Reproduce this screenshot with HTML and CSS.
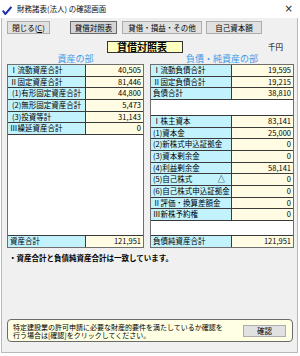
FILE: index.html
```html
<!DOCTYPE html>
<html lang="ja">
<head>
<meta charset="utf-8">
<title>財務諸表(法人) の確認画面</title>
<link rel="stylesheet" href="styles.css">
</head>
<body>
<div class="window">
  <div class="titlebar">
    <svg class="check" width="10" height="9" viewBox="0 0 10 9"><path d="M0.8 4.6 L3.4 8 L9.4 0.8" fill="none" stroke="#1f2fa8" stroke-width="2" stroke-linejoin="miter"/></svg>
    <span class="title">財務諸表(法人) の確認画面</span>
    <span class="close">×</span>
  </div>
  <div class="client">
    <div class="toolbar">
      <button class="btn btn-close">閉じる(<u>C</u>)</button>
      <button class="btn btn-bs active">貸借対照表</button>
      <button class="btn btn-pl">貸借・損益・その他</button>
      <button class="btn btn-eq">自己資本額</button>
    </div>
    <div class="heading-row">
      <div class="heading">貸借対照表</div>
      <div class="unit">千円</div>
    </div>
    <div class="sheets">
      <section class="sheet sheet-left">
        <h2 class="sheet-title">資産の部</h2>
        <div class="table">
          <div class="row"><span class="label">Ⅰ流動資産合計</span><span class="value">40,505</span></div>
          <div class="row"><span class="label">Ⅱ固定資産合計</span><span class="value">81,446</span></div>
          <div class="row"><span class="label sub">(1)有形固定資産合計</span><span class="value">44,800</span></div>
          <div class="row"><span class="label sub">(2)無形固定資産合計</span><span class="value">5,473</span></div>
          <div class="row"><span class="label sub">(3)投資等計</span><span class="value">31,143</span></div>
          <div class="row"><span class="label">Ⅲ繰延資産合計</span><span class="value">0</span></div>
          <div class="fill"></div>
          <div class="row total"><span class="label">資産合計</span><span class="value">121,951</span></div>
        </div>
      </section>
      <section class="sheet sheet-right">
        <h2 class="sheet-title">負債・純資産の部</h2>
        <div class="table">
          <div class="row"><span class="label">Ⅰ流動負債合計</span><span class="value">19,595</span></div>
          <div class="row"><span class="label">Ⅱ固定負債合計</span><span class="value">19,215</span></div>
          <div class="row"><span class="label">負債合計</span><span class="value">38,810</span></div>
          <div class="blank"></div>
          <div class="row"><span class="label">Ⅰ株主資本</span><span class="value">83,141</span></div>
          <div class="row"><span class="label">(1)資本金</span><span class="value">25,000</span></div>
          <div class="row"><span class="label">(2)新株式申込証拠金</span><span class="value">0</span></div>
          <div class="row"><span class="label">(3)資本剰余金</span><span class="value">0</span></div>
          <div class="row"><span class="label">(4)利益剰余金</span><span class="value">58,141</span></div>
          <div class="row"><span class="label">(5)自己株式<span class="tri">△</span></span><span class="value">0</span></div>
          <div class="row"><span class="label">(6)自己株式申込証拠金</span><span class="value">0</span></div>
          <div class="row"><span class="label">Ⅱ評価・換算差額金</span><span class="value">0</span></div>
          <div class="row"><span class="label">Ⅲ新株予約権</span><span class="value">0</span></div>
          <div class="fill"></div>
          <div class="row total"><span class="label">負債純資産合計</span><span class="value">121,951</span></div>
        </div>
      </section>
    </div>
    <p class="note">・資産合計と負債純資産合計は一致しています。</p>
    <div class="infobox">
      <p class="info-text">特定建設業の許可申請に必要な財産的要件を満たしているか確認を<br>行う場合は[確認]をクリックしてください。</p>
      <button class="btn btn-confirm">確認</button>
    </div>
  </div>
</div>
</body>
</html>
```

FILE: styles.css
```css
html, body {
  margin: 0;
  padding: 0;
  background: #ffffff;
}
body {
  width: 300px;
  height: 356px;
  overflow: hidden;
  font-family: "Noto Sans CJK JP", "Noto Sans", sans-serif;
  font-size: 7.5px;
  color: #000;
}
.window {
  width: 300px;
  height: 356px;
  display: flex;
  flex-direction: column;
}
.titlebar {
  height: 18px;
  display: flex;
  align-items: center;
  flex: none;
}
.check {
  margin-left: 2px;
  margin-top: 2px;
  flex: none;
}
.title {
  margin-left: 5px;
  font-size: 7.5px;
  line-height: 10px;
  color: #111;
}
.close {
  margin-left: auto;
  margin-right: 7px;
  font-family: "DejaVu Sans", sans-serif;
  font-size: 10px;
  line-height: 10px;
  color: #222;
}
.client {
  flex: 1;
  margin: 0 2px 3px 1px;
  border: 1px solid #b9b9b9;
  border-top: none;
  background: #f0f0f0;
  display: flex;
  flex-direction: column;
}
.toolbar {
  display: flex;
  height: 13px;
  margin-top: 3px;
  padding-left: 5px;
}
.btn {
  font-family: "Noto Sans CJK JP", "Noto Sans", sans-serif;
  font-size: 7.5px;
  line-height: 11px;
  height: 13px;
  padding: 0;
  margin: 0;
  background: #e1e1e1;
  border: 1px solid #adadad;
  color: #000;
  box-sizing: border-box;
}
.btn u { text-decoration: underline; }
.btn-close { width: 43px; }
.btn-bs { width: 47px; margin-left: 20px; }
.btn-pl { width: 80px; margin-left: 5px; }
.btn-eq { width: 56px; margin-left: 4px; }
.btn.active {
  background: #d4d4d4;
  border: 1px solid #6a6a6a;
}
.heading-row {
  display: flex;
  align-items: center;
  height: 12px;
  margin-top: 7px;
}
.heading {
  margin-left: 105px;
  width: 76px;
  height: 12px;
  box-sizing: border-box;
  border: 1px solid #333;
  background: #ffffc0;
  font-size: 10px;
  line-height: 10px;
  font-weight: bold;
  padding-left: 9px;
}
.unit {
  margin-left: 85px;
  font-size: 7.5px;
  line-height: 10px;
}
.sheets {
  display: flex;
  padding-left: 5px;
  gap: 6px;
}
.sheet {
  display: flex;
  flex-direction: column;
}
.sheet-left { width: 137px; }
.sheet-right { width: 144px; }
.sheet-title {
  margin: 0;
  height: 11px;
  font-size: 9px;
  line-height: 11px;
  font-weight: normal;
  color: #3d9be9;
  text-align: center;
}
.table {
  height: 184px;
  box-sizing: border-box;
  border: 1px solid #6e6e6e;
  background: #fff;
  display: flex;
  flex-direction: column;
}
.row {
  display: grid;
  height: 11.67px;
  box-sizing: border-box;
  border-bottom: 1px solid #3a3a3a;
  flex: none;
}
.sheet-left .row { grid-template-columns: 78px 1fr; }
.sheet-right .row { grid-template-columns: 81px 1fr; }
.label {
  background: #c2f3fd;
  border-right: 1px solid #3a3a3a;
  padding-left: 2px;
  line-height: 10.5px;
  white-space: nowrap;
  overflow: hidden;
  display: flex;
}
.label.sub { padding-left: 4px; }
.tri { margin-left: auto; margin-right: 6px; }
.value {
  background: #fffce3;
  text-align: right;
  padding-right: 2px;
  line-height: 10.5px;
}
.blank {
  height: 16px;
  box-sizing: border-box;
  border-bottom: 1px solid #3a3a3a;
  flex: none;
}
.fill { flex: 1; }
.row.total {
  border-top: 1px solid #3a3a3a;
  border-bottom: none;
  height: 11.67px;
}
.note {
  margin: 5px 0 0 7px;
  font-size: 7.5px;
  line-height: 10px;
  font-weight: bold;
}
.infobox {
  margin: auto 4px 10px 5px;
  height: 23px;
  box-sizing: border-box;
  border: 1px solid #6b6b6b;
  border-radius: 4px;
  background: #ffffe3;
  display: flex;
  align-items: center;
  padding-left: 5px;
}
.info-text {
  margin: 0;
  font-size: 7px;
  line-height: 8px;
  flex: 1;
  white-space: nowrap;
}
.btn-confirm {
  width: 43px;
  height: 12px;
  margin-right: 6px;
  line-height: 10px;
}
```
